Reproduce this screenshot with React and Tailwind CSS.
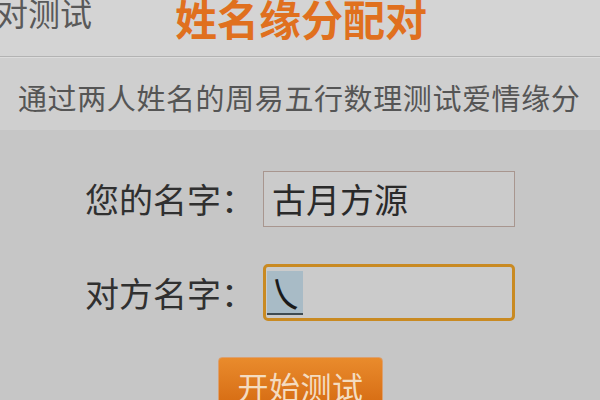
export default function App() {
  const font = { fontFamily: '"Noto Sans CJK SC", "Noto Sans", sans-serif' };
  return (
    <div className="w-[600px] h-[400px] overflow-hidden bg-[#c6c6c6] flex flex-col" style={font}>
      <div className="h-[57px] shrink-0 bg-[#d4d4d4] flex items-start overflow-hidden border-b border-[#b3b3b3]">
        <div className="ml-[-4px] mt-[-4px] text-[32px] leading-none text-[#595959] whitespace-nowrap">对测试</div>
        <div className="ml-[83px] mt-[-3px] text-[42px] leading-none font-bold text-[#e0701e] whitespace-nowrap">姓名缘分配对</div>
      </div>
      <div className="h-[73px] shrink-0 bg-[#cfcfcf] border-t border-[#dcdcdc] flex items-center pl-[18px] pt-[6px]">
        <div className="text-[29px] leading-none tracking-[0.6px] text-[#555] whitespace-nowrap">通过两人姓名的周易五行数理测试爱情缘分</div>
      </div>
      <div className="flex flex-col pt-[41px]">
        <div className="flex items-center pl-[85px]">
          <div className="w-[178px] text-[34px] leading-none text-[#303030] whitespace-nowrap">您的名字：</div>
          <div className="w-[252px] h-[56px] border border-[#a8968f] bg-[#cbcbcb] flex items-center pl-[8px]">
            <span className="text-[34px] leading-none text-[#2a2a2a]">古月方源</span>
          </div>
        </div>
        <div className="flex items-center pl-[85px] mt-[37px]">
          <div className="w-[178px] text-[34px] leading-none text-[#303030] whitespace-nowrap">对方名字：</div>
          <div className="w-[252px] h-[57px] border-[3px] border-[#c98a22] rounded-[5px] bg-[#cbcbcb] flex items-center pl-[1px]">
            <span className="w-[36px] h-[44px] bg-[#a8bbc6] border-b-2 border-[#3e4b52] flex items-center justify-center">
              <span className="text-[40px] leading-none text-[#1a1a1a]">㇏</span>
            </span>
          </div>
        </div>
        <div className="flex justify-center mt-[36px] pl-[1px]">
          <div className="w-[165px] h-[52px] rounded-[4px] bg-gradient-to-b from-[#e98b2c] to-[#d56a10] border border-[#dba070] flex items-start justify-center pt-[12px]">
            <span className="text-[31px] leading-none text-[#f4dcc0] tracking-[0.5px]">开始测试</span>
          </div>
        </div>
      </div>
    </div>
  );
}
